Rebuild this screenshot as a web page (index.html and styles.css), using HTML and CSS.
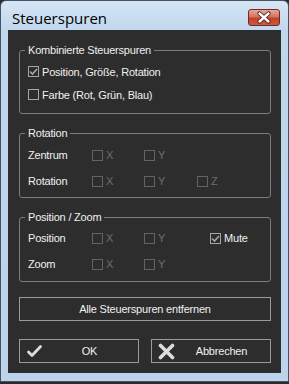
FILE: index.html
```html
<!DOCTYPE html>
<html lang="de">
<head>
    <meta charset="UTF-8">
    <title>Steuerspuren</title>
    <link rel="stylesheet" href="styles.css">
</head>
<body>
<div class="window">
    <div class="titlebar">
        <span class="title">Steuerspuren</span>
        <span class="close">
            <svg width="32" height="17" viewBox="0 0 32 17">
                <path d="M11.5 4.5 L20.5 12.5 M20.5 4.5 L11.5 12.5" stroke="#4a1a14" stroke-width="4.2" stroke-linecap="round"/>
                <path d="M11.5 4.5 L20.5 12.5 M20.5 4.5 L11.5 12.5" stroke="#ffffff" stroke-width="2.4" stroke-linecap="round"/>
            </svg>
        </span>
    </div>
    <div class="client">
        <!-- Kombinierte Steuerspuren -->
        <fieldset class="group group-combined">
            <legend>Kombinierte Steuerspuren</legend>
            <label class="check">
                <span class="box checked"><svg width="9" height="9" viewBox="0 0 9 9"><path d="M1 4.5 L3.5 7 L8 2" fill="none" stroke="#a6a6a6" stroke-width="1.6"/></svg></span>
                Position, Größe, Rotation
            </label>
            <label class="check">
                <span class="box"></span>
                Farbe (Rot, Grün, Blau)
            </label>
        </fieldset>

        <!-- Rotation -->
        <fieldset class="group group-rotation">
            <legend>Rotation</legend>
            <div class="grid grid-rotation">
                <span class="row-label">Zentrum</span>
                <span class="check disabled"><span class="box"></span>X</span>
                <span class="check disabled"><span class="box"></span>Y</span>
                <span></span>
                <span class="row-label">Rotation</span>
                <span class="check disabled"><span class="box"></span>X</span>
                <span class="check disabled"><span class="box"></span>Y</span>
                <span class="check disabled"><span class="box"></span>Z</span>
            </div>
        </fieldset>

        <!-- Position / Zoom -->
        <fieldset class="group group-position">
            <legend>Position / Zoom</legend>
            <div class="grid grid-position">
                <span class="row-label">Position</span>
                <span class="check disabled"><span class="box"></span>X</span>
                <span class="check disabled"><span class="box"></span>Y</span>
                <span class="check"><span class="box checked"><svg width="9" height="9" viewBox="0 0 9 9"><path d="M1 4.5 L3.5 7 L8 2" fill="none" stroke="#a6a6a6" stroke-width="1.6"/></svg></span>Mute</span>
                <span class="row-label">Zoom</span>
                <span class="check disabled"><span class="box"></span>X</span>
                <span class="check disabled"><span class="box"></span>Y</span>
                <span></span>
            </div>
        </fieldset>

        <button class="btn btn-wide">Alle Steuerspuren entfernen</button>

        <div class="actions">
            <button class="btn btn-icon">
                <svg class="icon" width="17" height="14" viewBox="0 0 17 14">
                    <path d="M2.5 8 L6 11.5 L14.5 2.5" fill="none" stroke="#dcdcdc" stroke-width="2.8" stroke-linecap="round" stroke-linejoin="round"/>
                </svg>
                <span class="btn-text">OK</span>
            </button>
            <button class="btn btn-icon">
                <svg class="icon" width="17" height="17" viewBox="0 0 17 17">
                    <path d="M2.5 2.5 L14.5 14.5 M14.5 2.5 L2.5 14.5" stroke="#dcdcdc" stroke-width="3.6" stroke-linecap="round"/>
                </svg>
                <span class="btn-text">Abbrechen</span>
            </button>
        </div>
    </div>
</div>
</body>
</html>
```

FILE: styles.css
```css
* {
    box-sizing: border-box;
}
body {
    margin: 0;
    background: #2a2a2a;
    font-family: "Liberation Sans", Arial, sans-serif;
    font-size: 11px;
    letter-spacing: -0.2px;
    color: #f0f0f0;
}
.window {
    width: 289px;
    height: 382px;
    background: linear-gradient(#d6e5f5, #c0d6ed 30px, #bcd3eb);
    border: 1px solid #45525f;
    border-radius: 6px 6px 0 0;
    padding: 0 7px 8px 7px;
    display: flex;
    flex-direction: column;
}
.titlebar {
    height: 29px;
    display: flex;
    align-items: flex-start;
    justify-content: space-between;
    padding: 0 1px 0 4px;
}
.title {
    font-family: "Open Sans", "Noto Sans", sans-serif;
    font-size: 15px;
    letter-spacing: 0;
    color: #000;
    margin-top: 8px;
    line-height: 19px;
}
.close {
    display: block;
    width: 32px;
    height: 17px;
    margin-top: 8px;
    border: 1px solid #6b2a22;
    border-radius: 3px;
    background: linear-gradient(#e8a89a, #d6735f 45%, #c2402a 55%, #cb5b40);
    overflow: hidden;
}
.close svg {
    display: block;
    margin: -1px 0 0 -1px;
}
.client {
    flex: 1;
    background: #2d2d2d;
    padding: 13px 10px 0 11px;
    display: flex;
    flex-direction: column;
}

/* Gruppen */
.group {
    margin: 0;
    min-width: 0;
    border: 1px solid #7c7c7c;
    border-radius: 3px;
    padding: 2px 6px 7px 5px;
}
.group legend {
    padding: 0 3px;
    line-height: 15px;
}
.group-rotation {
    margin-top: 12px;
    padding: 1px 6px 3px 5px;
}
.group-position {
    margin-top: 12px;
    padding: 0 6px 4px 5px;
}
.check {
    display: flex;
    align-items: center;
    height: 23px;
    padding-left: 3px;
    color: #f0f0f0;
}
.box {
    width: 11px;
    height: 11px;
    border: 1px solid #a6a6a6;
    margin-right: 3px;
    display: flex;
    align-items: center;
    justify-content: center;
    flex-shrink: 0;
}
.box svg {
    display: block;
}
.grid {
    display: grid;
    grid-auto-rows: 26px;
    align-items: center;
}
.grid .check {
    height: 26px;
    padding-left: 0;
}
.grid-rotation {
    grid-template-columns: 64px 52px 53px 1fr;
    padding-left: 3px;
}
.grid-position {
    grid-template-columns: 64px 52px 66px 1fr;
    padding-left: 3px;
}
.check.disabled {
    color: #6e6e6e;
}
.check.disabled .box {
    border-color: #636363;
}

/* Buttons */
.btn {
    height: 24px;
    margin: 0;
    padding: 0;
    border: 1px solid #9a9a9a;
    background: #2d2d2d;
    color: #f0f0f0;
    font-family: inherit;
    font-size: 11px;
    letter-spacing: -0.2px;
}
.btn-wide {
    margin-top: 15px;
    width: 100%;
}
.actions {
    margin-top: 18px;
    display: flex;
    gap: 12px;
}
.btn-icon {
    width: 120px;
    display: flex;
    align-items: center;
    padding: 0 2px 0 6px;
}
.btn-icon .icon {
    flex-shrink: 0;
    display: block;
}
.btn-text {
    flex: 1;
    text-align: center;
}
```
